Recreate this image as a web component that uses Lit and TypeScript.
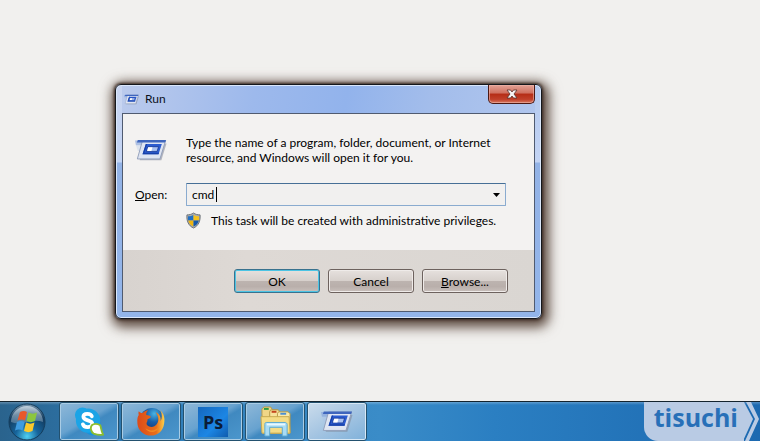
import { LitElement, html, css, svg } from "lit";
import { customElement } from "lit/decorators.js";

const runGlyph = svg`
  <path d="M0 1H9L7 6H1Z" fill="#7f9fda" opacity=".6"/>
  <path d="M1 6H7L5 12H3Z" fill="#a9c0e8" opacity=".3"/>
  <path d="M9 4H33.500L28 22H5Z" fill="#7d8494" opacity=".55"/>
  <path d="M8 1H32.500L26.500 20.500H2.500Z" fill="#dfe5f2" stroke="#8f9db9" stroke-width="1"/>
  <path d="M3 .5H33L32 3H2Z" fill="#3f66bd"/>
  <path d="M11.500 4.500H28.500L25 15.500H8Z" fill="#2c5cd0"/>
  <path d="M8 15.500L11.500 4.500H13L10 14H25.500L25 15.500Z" fill="#1740a8"/>
  <path d="M13.500 7.500H25L23.500 12.500H12Z" fill="#aac2f2" stroke="#12328f" stroke-width=".8"/>
  <path d="M14 8H18.500L17.500 12H13Z" fill="#fff"/>`;

const runIcon = (cls: string) => html`<svg class=${cls} viewBox="0 0 34 22" aria-hidden="true">${runGlyph}</svg>`;

const shieldIcon = html`<svg class="shield" viewBox="0 0 16 17" aria-hidden="true">
  <path d="M8 .5C10 2 12.500 2.500 15 2.500C15.500 9 13.500 14 8 16.500C2.500 14 .5 9 1 2.500C3.500 2.500 6 2 8 .5Z" fill="#a9adb0" stroke="#6b7075"/>
  <path d="M8 2.300V8.500H2.300C2 7 2 5.500 2.200 4C4.500 4 6.500 3.500 8 2.300Z" fill="#1f6fc4"/>
  <path d="M8 2.300V8.500H13.700C14 7 14 5.500 13.800 4C11.500 4 9.500 3.500 8 2.300Z" fill="#f5c21c"/>
  <path d="M8 8.500H2.300C3.200 11.500 5 13.700 8 15Z" fill="#eeb512"/>
  <path d="M8 8.500H13.700C12.800 11.500 11 13.700 8 15Z" fill="#1559ac"/>
</svg>`;

const skypeIcon = html`<svg class="app" viewBox="0 0 32 32" aria-hidden="true">
  <circle cx="9" cy="9" r="8" fill="#1ba4e6"/><circle cx="20" cy="22" r="9" fill="#1794dc"/>
  <circle cx="15" cy="15" r="13" fill="#1ba4e6"/>
  <path d="M19 10.500C18 7 10 6.500 10 11C10 16 19.500 13.500 19.500 18.500C19.500 23 10.500 23 9.500 19" fill="none" stroke="#fff" stroke-width="4" stroke-linecap="round"/>
  <path d="M19 20C21 18 25 18 28 20C29 23 29 26 31 30C27 31 24 30 21 29C18 27 17 23 19 20Z" fill="#fff" stroke="#8bbd2e" stroke-width="2"/>
</svg>`;

const firefoxIcon = html`<svg class="app" viewBox="0 0 32 32" aria-hidden="true">
  <defs><radialGradient id="globe" cx=".6" cy=".25" r=".7"><stop offset="0" stop-color="#48b4e4"/><stop offset=".5" stop-color="#1a5fa8"/><stop offset="1" stop-color="#123c80"/></radialGradient>
  <linearGradient id="fox" x1="0" x2="1"><stop offset="0" stop-color="#dc4a1a"/><stop offset=".7" stop-color="#e8701a"/><stop offset="1" stop-color="#fbd04b"/></linearGradient></defs>
  <circle cx="17" cy="14" r="12.500" fill="url(#globe)"/>
  <path d="M3 5C4 6 5 7 7 7C9 5 11 4 13 4C11 6 11 7 11 9C13 9 15 10 16 11C15 13 13 13 12 14C13 16 10 17 12 20C15 23 20 22 22 19C25 15 24 10 21 6C26 8 27 13 26 16C28 13 28 8 26 4C30 8 31 13 30 18C29 26 23 31 16 31C8 31 2 25 1.500 18C1 13 2 10 3 9C2.500 8 2.500 6 3 5Z" fill="url(#fox)"/>
  <path d="M25 21C22 26 14 27 10 23C13 29 22 29 25 21Z" fill="#f28a22"/>
</svg>`;

const folderIcon = html`<svg class="app folder" viewBox="0 0 34 32" aria-hidden="true">
  <path d="M3 8V3L5 1H12L14 4H19V28H4Z" fill="#f0d687" stroke="#b69a48"/>
  <path d="M5 3H10" stroke="#2f9a3c" stroke-width="2"/>
  <path d="M11 6L12 4H20L22 7H28V28H11Z" fill="#f7e29b" stroke="#b69a48"/>
  <path d="M13 6H18" stroke="#c4461e" stroke-width="2"/>
  <path d="M19 8L20 6H30L32 8V28H19Z" fill="#fae9a8" stroke="#b69a48"/>
  <path d="M22 8H28" stroke="#4a8ed4" stroke-width="2"/>
  <path d="M2 11H31L32 28H3Z" fill="#f5dc85" stroke="#c7a951"/>
  <path d="M6 31V19C6 17 7 17 8 17H27C28 17 29 18 29 19V31H24V22H11V31Z" fill="#a9dcf5" stroke="#5ca9d2"/>
  <path d="M8 19H27" stroke="#e8f8ff" stroke-width="2"/>
</svg>`;

const startOrb = html`<svg class="orb" viewBox="0 0 38 38" aria-hidden="true">
  <defs><radialGradient id="orb" cx=".5" cy=".9" r=".9"><stop offset="0" stop-color="#4fd0f2"/><stop offset=".35" stop-color="#17659c"/><stop offset=".75" stop-color="#123a5e"/><stop offset="1" stop-color="#7f9db4"/></radialGradient>
  <linearGradient id="gloss" x2="0" y2="1"><stop offset="0" stop-color="#e2ebf2" stop-opacity=".75"/><stop offset="1" stop-color="#8ba8be" stop-opacity=".45"/></linearGradient></defs>
  <circle cx="19" cy="19" r="18" fill="url(#orb)" stroke="#143d5c"/>
  <path d="M3 19A16 16 0 0 1 35 19C25 15 13 23 3 19Z" fill="url(#gloss)"/>
  <path d="M12 9C14.500 7.500 17 7.500 19 9L17 17.500C14.500 16 12.500 16 9.500 17.500Z" fill="#e9582a"/>
  <path d="M20.500 9.500C23.500 11 26 11 29 9.500L27 18C24 19.500 21.500 19.500 18.500 18Z" fill="#8cc63e"/>
  <path d="M9 19C12 17.500 14 17.500 16.700 19L14.500 27.500C12 26 9.500 26 7 27.500Z" fill="#3e9be0"/>
  <path d="M18 19.500C21 21 23.500 21 26.500 19.500L24.500 28C21.500 29.500 19 29.500 16 28Z" fill="#fbc92b"/>
</svg>`;

@customElement("run-dialog")
export class RunDialog extends LitElement {
  static styles = css`
    :host { display: block; }
    * { box-sizing: border-box; }
    .window {
      padding: 0 6px 6px;
      border: 1px solid #15171c;
      border-radius: 6px;
      background:
        linear-gradient(#c9d5f0, #c3d4f4 77px, #93b3e6 78px, #93b5ea) left / 6px 100% no-repeat,
        linear-gradient(#b4c9ee, #c3d4f4 77px, #93b3e6 78px, #93b5ea) right / 6px 100% no-repeat,
        linear-gradient(#93b5ea, #93b5ea) bottom / 100% 7px no-repeat,
        linear-gradient(100deg, #bccbec, #9db9ec 30%, #92b3ec 50%, #a3bdeb 68%, #b5c9ef);
      box-shadow: inset 0 0 0 1px #dbe7fa, 0 0 3px 1px #3a2a22, 2px 3px 11px 4px #5e4c42, 2px 4px 14px 6px #8d7c7266;
    }
    .title { display: flex; align-items: flex-start; height: 28px; }
    h1 { flex: 1; display: flex; align-items: center; gap: 6px; margin: 0; padding: 0 2px; height: 28px; font: 12px/16px Lato, "Noto Sans", sans-serif; color: #0c111c; }
    .small { width: 15px; height: 11px; }
    .large { width: 32px; height: 22px; }
    .close {
      display: grid; place-items: center;
      width: 47px; height: 19px; padding: 0;
      border: 1px solid #4c1914; border-top: 0; border-radius: 0 0 5px 5px;
      background: linear-gradient(#e3a296, #cf6f5e 45%, #b52c15 50%, #c0402a 80%, #d97a62);
      box-shadow: inset 0 0 0 1px #eeb5aa99;
    }
    .close svg { width: 12px; height: 10px; }
    .client { border: 1px solid #505b70; background: #f3f2f1; }
    .content {
      display: grid; grid-template-columns: 51px 1fr; align-items: center;
      padding: 21px 28px 21px 12px;
    }
    p, label { margin: 0; }
    .combo { display: flex; height: 23px; margin-top: 18px; border: 1px solid #8aabcf; border-top-color: #466f96; border-radius: 1px; background: #f1f0ef; }
    label { margin-top: 18px; }
    input { flex: 1; min-width: 0; border: 0; padding: 0 5px; background: none; font: inherit; color: inherit; outline: 0; }
    .field { position: relative; flex: 1; display: flex; }
    .caret { position: absolute; left: 29px; top: 3px; width: 1px; height: 15px; background: #000; }
    .drop { display: grid; place-items: center; width: 17px; border: 0; padding: 0; background: none; }
    .drop svg { width: 7px; height: 4px; }
    .note { grid-column: 2; display: flex; align-items: center; gap: 10px; margin-top: 6px; }
    .shield { width: 15px; height: 17px; }
    .actions { display: flex; justify-content: flex-end; gap: 8px; padding: 19px 26px 18px; background: linear-gradient(90deg, #d8d3cf, #ded9d5 30%, #dad6d2); }
    .action {
      width: 86px; height: 24px; padding: 0;
      border: 1px solid #6d625e; border-radius: 3px;
      background: linear-gradient(#e6e1de, #d7d0cc 48%, #bdb4b0 50%, #b9afab 75%, #c9c0bc);
      box-shadow: inset 0 0 0 1px #efebe9; font: inherit; color: inherit;
    }
    .default { border-color: #39728e; box-shadow: inset 0 0 0 1px #4cc4e4; }
    .body { font: 12px/15px Lato, "Noto Sans", sans-serif; color: #000; }
  `;

  render() {
    return html`<section class="window" aria-label="Run">
      <header class="title">
        <h1>${runIcon("small")}Run</h1>
        <button class="close" aria-label="Close"><svg viewBox="0 0 12 10"><path d="M1 1H4.500L6 3L7.500 1H11L8 5L11 9H7.500L6 7L4.500 9H1L4 5Z" fill="#f7f4f4" stroke="#57302c" stroke-width=".8"/></svg></button>
      </header>
      <div class="client body">
        <div class="content">
          ${runIcon("large")}
          <p>Type the name of a program, folder, document, or Internet resource, and Windows will open it for you.</p>
          <label for="command"><u>O</u>pen:</label>
          <div class="combo">
            <div class="field"><input id="command" value="cmd"><span class="caret"></span></div>
            <button class="drop" aria-label="Show history"><svg viewBox="0 0 7 4"><path d="M0 0H7L3.500 4Z"/></svg></button>
          </div>
          <div class="note">${shieldIcon}<span>This task will be created with administrative privileges.</span></div>
        </div>
        <footer class="actions">
          <button class="action default">OK</button>
          <button class="action">Cancel</button>
          <button class="action"><u>B</u>rowse...</button>
        </footer>
      </div>
    </section>`;
  }
}

@customElement("app-root")
export class AppRoot extends LitElement {
  static styles = css`
    :host { display: flex; flex-direction: column; min-height: 100vh; background: #f1f0ee; }
    * { box-sizing: border-box; }
    .desktop { position: relative; flex: 1; min-height: 340px; }
    run-dialog { position: absolute; left: 115px; top: 84px; width: 427px; }
    .taskbar {
      display: flex; height: 40px; border-top: 1px solid #14242f;
      background: linear-gradient(#ffffff40, #ffffff00 3px), linear-gradient(90deg, #2a638d, #2f7db8 20%, #3a8cc8 50%, #2b7fc2 65%, #1c69b0);
    }
    .start { display: grid; place-items: center; width: 54px; margin-right: 5px; border: 0; padding: 0; background: none; }
    .orb { width: 38px; height: 38px; }
    .tasks { display: flex; flex: 1; gap: 2px; }
    .task {
      display: grid; place-items: center; width: 60px; padding: 0;
      border: 1px solid #23516f; border-radius: 3px;
      background: linear-gradient(150deg, #8fb8d8, #67a2cf 45%, #4089c0 55%, #4c97cd);
      box-shadow: inset 0 0 0 1px #a9cce5;
    }
    .active { background: linear-gradient(150deg, #cbdcec, #a5c5e2 50%, #7fb1da); box-shadow: inset 0 0 0 1px #d8e8f5; }
    .app { width: 30px; height: 31px; }
    .folder { width: 33px; }
    .run { width: 32px; height: 21px; }
    .ps { display: grid; place-items: center; width: 30px; height: 30px; background: linear-gradient(135deg, #1467bd, #1c86e4 60%, #0f5cae); color: #0b1c36; font: bold 18px/30px "Open Sans", sans-serif; }
    .brand { display: flex; align-items: flex-start; }
    .name { height: 39px; padding: 0 6px 0 10px; border-radius: 0 0 0 14px; background: #b9cbe4; color: #2870b8; font: bold 25px/30px "Open Sans", sans-serif; }
    .chevrons { width: 16px; height: 39px; }
  `;

  render() {
    return html`
      <main class="desktop"><run-dialog></run-dialog></main>
      <nav class="taskbar" aria-label="Taskbar">
        <button class="start" aria-label="Start">${startOrb}</button>
        <div class="tasks">
          <button class="task" aria-label="Skype">${skypeIcon}</button>
          <button class="task" aria-label="Firefox">${firefoxIcon}</button>
          <button class="task" aria-label="Photoshop"><span class="ps">Ps</span></button>
          <button class="task" aria-label="Explorer">${folderIcon}</button>
          <button class="task active" aria-label="Run">${runIcon("run")}</button>
        </div>
        <div class="brand"><span class="name">tisuchi</span>
          <svg class="chevrons" viewBox="0 0 16 39" aria-hidden="true">
            <path d="M0 0L9 17L-1 39H-1V0Z" fill="#b9cbe4"/>
            <path d="M2 0H7L15 17L5 39H1L11 17Z" fill="#b9cbe4"/>
          </svg>
        </div>
      </nav>`;
  }
}
